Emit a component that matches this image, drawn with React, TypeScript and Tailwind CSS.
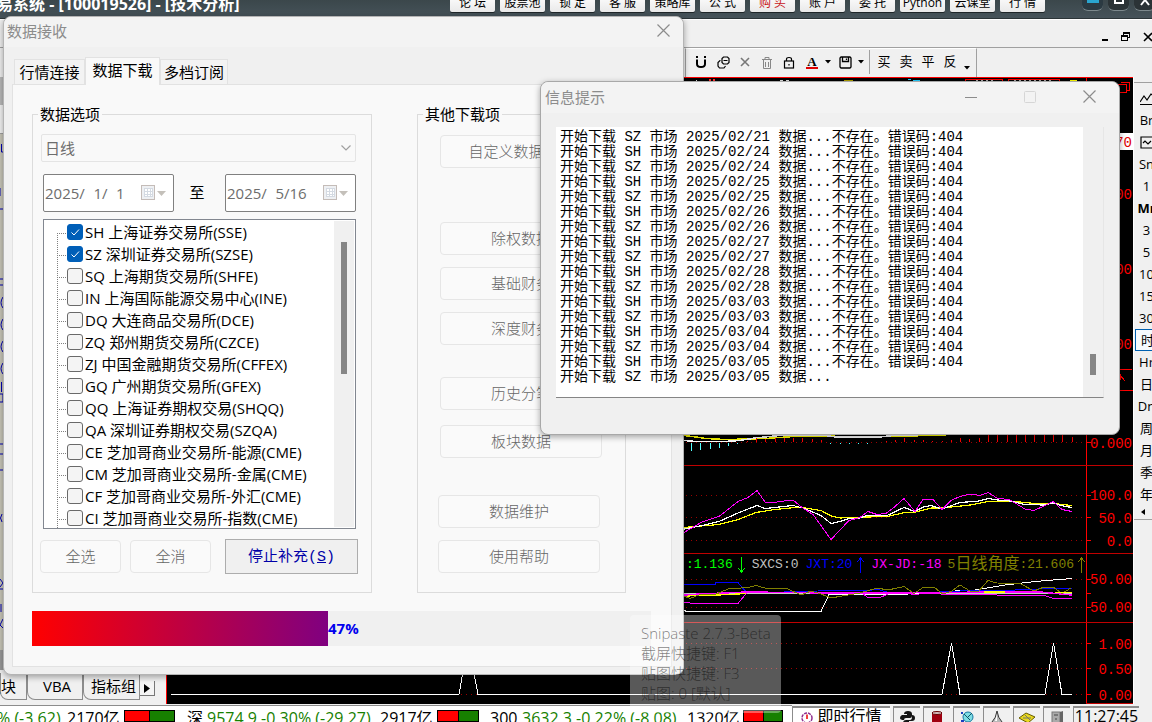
import React from 'react';

const navItems = ['论 坛', '股票池', '锁 定', '客 服', '策略库', '公 式', '购 买', '账 户', '委 托', 'Python', '云课堂', '行 情'];

const exchanges: { name: string; on?: boolean }[] = [
  { name: 'SH 上海证券交易所(SSE)', on: true },
  { name: 'SZ 深圳证券交易所(SZSE)', on: true },
  { name: 'SQ 上海期货交易所(SHFE)' },
  { name: 'IN 上海国际能源交易中心(INE)' },
  { name: 'DQ 大连商品交易所(DCE)' },
  { name: 'ZQ 郑州期货交易所(CZCE)' },
  { name: 'ZJ 中国金融期货交易所(CFFEX)' },
  { name: 'GQ 广州期货交易所(GFEX)' },
  { name: 'QQ 上海证券期权交易(SHQQ)' },
  { name: 'QA 深圳证券期权交易(SZQA)' },
  { name: 'CE 芝加哥商业交易所-能源(CME)' },
  { name: 'CM 芝加哥商业交易所-金属(CME)' },
  { name: 'CF 芝加哥商业交易所-外汇(CME)' },
  { name: 'CI 芝加哥商业交易所-指数(CME)' },
];

const failed: [string, string][] = [
  ['SZ', '02/21'], ['SH', '02/24'], ['SZ', '02/24'], ['SH', '02/25'], ['SZ', '02/25'], ['SH', '02/26'],
  ['SZ', '02/26'], ['SH', '02/27'], ['SZ', '02/27'], ['SH', '02/28'], ['SZ', '02/28'], ['SH', '03/03'],
  ['SZ', '03/03'], ['SH', '03/04'], ['SZ', '03/04'], ['SH', '03/05'],
];
const logText =
  failed.map(([m, d]) => `开始下载 ${m} 市场 2025/${d} 数据...不存在。错误码:404`).join('\n') +
  '\n开始下载 SZ 市场 2025/03/05 数据...';

function TitleBar() {
  return (
    <header className="flex h-[19px] shrink-0 items-start overflow-hidden border-b border-[#2c3538] bg-linear-to-b from-[#3b474b] to-[#46535a]">
      <h1 className="-mt-[6px] -ml-[3px] w-[453px] shrink-0 text-[16px] leading-5 font-bold whitespace-nowrap text-white">
        易系统 - [100019526] - [技术分析]
      </h1>
      <nav className="flex flex-1 gap-[5px]">
        {navItems.map((n) => (
          <button
            key={n}
            className={
              '-mt-[6px] h-[18px] w-[45px] shrink-0 rounded-xs bg-linear-to-b from-white to-[#e9e9e9] text-[12px] leading-[18px] whitespace-nowrap shadow-[0_1px_0_#1f2629] ' +
              (n === '购 买' ? 'text-[#c8181c]' : 'text-black')
            }
          >
            {n}
          </button>
        ))}
      </nav>
      <div className="flex w-[70px] shrink-0 gap-[5px]">
        <button aria-label="最小化" className="flex h-[11px] w-[21px] shrink-0 justify-center rounded-b-md border-b border-[#7d898d] bg-[#2b3a42]">
          <span className="h-[3px] w-[12px] bg-[#2aa5cf]" />
        </button>
        <button aria-label="最大化" className="flex h-[11px] w-[21px] shrink-0 justify-center rounded-b-md border-b border-[#7d898d] bg-[#2b3336]">
          <span className="h-[4px] w-[10px] border-2 border-t-0 border-white" />
        </button>
        <button aria-label="关闭" className="flex h-[11px] w-[21px] shrink-0 justify-center rounded-b-md border-b border-[#7d898d] bg-[#2b3336]">
          <svg width="10" height="6" stroke="#fff" strokeWidth="2"><path d="M1 5L5 0L9 5" fill="none" /></svg>
        </button>
      </div>
    </header>
  );
}

function MenuBar() {
  return (
    <div className="flex h-[29px] shrink-0 items-center justify-end gap-3 border-t border-b border-t-white border-b-[#a0a0a0] bg-[#f0f0f0] pt-[6px]">
      <button aria-label="最小化子窗口"><svg width="8" height="10"><rect x="1" y="7" width="6" height="2" /></svg></button>
      <button aria-label="还原子窗口">
        <svg width="10" height="10" fill="none" stroke="#000" shapeRendering="crispEdges">
          <path d="M2.5 3V.5h6v5H7M2 1h7" /><path d="M.5 3.5h6v5h-6zM0 4.5h7" />
        </svg>
      </button>
      <button aria-label="关闭子窗口"><svg width="9" height="10" stroke="#000" strokeWidth="1.6"><path d="M1 1l8 8M9 1l-8 8" /></svg></button>
    </div>
  );
}

const Caret = () => (
  <svg width="6" height="4"><path d="M0 0h6L3 3.5z" fill="#000" /></svg>
);

const toolBtn = 'flex h-6 w-[22px] shrink-0 items-center justify-center text-[13px] text-black';

function Toolbar() {
  return (
    <div className="flex h-[29px] shrink-0 bg-[#f0f0f0]">
      <div className="ml-[685px] flex items-center border-t border-r border-l border-t-white border-r-[#a0a0a0] border-l-[#a0a0a0] pr-1 pb-[2px] pl-1">
        <button className={toolBtn} aria-label="磁吸">
          <svg width="12" height="14" fill="none" stroke="#000" strokeWidth="2">
            <path d="M2 4.5V9q0 3 4 3t4-3V4.5" /><path d="M2 1v2M10 1v2" />
          </svg>
        </button>
        <button className={toolBtn} aria-label="复制">
          <svg width="13" height="13" fill="none" stroke="#000" strokeWidth="1.2">
            <path d="M6.5 1h4L12 2.500v4L10.500 8h-4L5 6.500v-4z" /><path d="M3.500 4.500H3L1 6.500V10l1.500 2H7l1.500-2M6.500 4.500h4" />
          </svg>
        </button>
        <button className={toolBtn} aria-label="删除">
          <svg width="10" height="10" stroke="#777" strokeWidth="1.6"><path d="M1 1l8 8M9 1L1 9" /></svg>
        </button>
        <button className={toolBtn} aria-label="清空">
          <svg width="12" height="13" fill="none" stroke="#888"><path d="M1 3.500h10M4 3V1.500h4V3M2.500 4v8.500h7V4M4.500 6v5M7.500 6v5" /></svg>
        </button>
        <button className={toolBtn} aria-label="锁定">
          <svg width="12" height="13" fill="none" stroke="#000" strokeWidth="1.2"><rect x="1.5" y="5" width="9" height="7" /><path d="M3.500 5V3q0-1.500 2.500-1.500T8.500 3v2M6 8v1.500" /></svg>
        </button>
        <button className={toolBtn + ' ml-px'} aria-label="字体颜色">
          <span className="border-b-2 border-[#e00000] px-px font-['Liberation_Serif',serif] text-[13px] leading-[11px] font-bold">A</span>
        </button>
        <button className="flex w-[10px] justify-center" aria-label="颜色选项"><Caret /></button>
        <button className={toolBtn + ' ml-px'} aria-label="保存">
          <svg width="13" height="13" fill="none" stroke="#000" strokeWidth="1.3"><path d="M2 1h9l1 1v9l-1 1H2l-1-1V2zM3.500 1v4.500h6V1M7.500 2.500v1.500" /></svg>
        </button>
        <button className="flex w-[10px] justify-center" aria-label="保存选项"><Caret /></button>
        <span className="mx-[3px] h-6 w-px bg-[#a0a0a0]" />
        <button className={toolBtn}>买</button>
        <button className={toolBtn}>卖</button>
        <button className={toolBtn}>平</button>
        <button className={toolBtn}>反</button>
        <button className="ml-px flex w-[10px] justify-center pt-3" aria-label="更多"><Caret /></button>
      </div>
    </div>
  );
}

function LeftColumn() {
  const tab = 'flex h-[27px] items-center justify-center rounded-bl-lg border-r border-b border-l border-[#8c8c8c] bg-[#f0f0f0] text-[15px] whitespace-nowrap text-black';
  return (
    <aside className="flex w-[166px] shrink-0 flex-col bg-[#f0f0f0]">
      <div className="h-[28px] bg-[#b9b9b9]" />
      <div className="h-[29px] border-b border-[#a0a0a0] bg-[#f4f4f4]" />
      <div className="flex-1 bg-[#c8c6b8]">
        <svg width="4" height="500" fill="none" stroke="#0000b4">
          <path d="M1.500 10v8h2M0 54v8M0 75h3M0 145h3M0 151h3M3 163q-4 6 0 11M3 185q-4 6 0 11M3 207q-4 6 0 11M3 229q-4 6 0 11M1.500 248v10M0 260h3v8H0M0 310h3M0 320h3M0 336h3M2 380q-3 4 0 8M0 445l3 4l-3 4M0 455h3M1 470v8M3 485l-3 6l3 3" />
        </svg>
      </div>
      <div className="h-5 bg-[#9a9a9a]" />
      <div className="flex h-[34px] pt-[3px]">
        <button className={tab + ' w-[27px] justify-end rounded-none pr-[10px]'}>板块</button>
        <button className={tab + ' w-[56px] pl-1'}>VBA</button>
        <button className={tab + ' w-[57px] pl-1'}>指标组</button>
        <button aria-label="向右" className="mt-2 flex size-[15px] items-center justify-center border-r border-b border-[#777] bg-[#f4f4f4]">
          <svg width="6" height="9"><path d="M0 0v9L6 4.500z" /></svg>
        </button>
      </div>
    </aside>
  );
}

const axisText = "font-['Liberation_Mono',monospace] text-[14px]";

function Axis({ top, height, labels, ticks = [], children, grow }: { top: number; height: number; labels: [string, number][]; ticks?: number[]; children?: React.ReactNode; grow?: boolean }) {
  return (
    <svg width="47" height={grow ? undefined : height} viewBox={`1086 ${top} 47 ${height}`} preserveAspectRatio="xMinYMax" className="shrink-0 overflow-hidden" shapeRendering="crispEdges">
      <path d={`M1086.5 ${top}v${height - 1}` + ticks.map((t) => `M1086 ${t + 0.5}h5`).join('')} stroke="#f00" fill="none" />
      <path d={`M1086 ${top + height - 0.5}h47`} stroke="#c00000" />
      {labels.map(([l, y]) => (
        <text key={l + y} x="1132" y={y + 5} textAnchor="end" fill="#f00" className={axisText}>{l}</text>
      ))}
      {children}
    </svg>
  );
}

function Plot({ top, height, grid, children, panelLine = true }: { top: number; height: number; grid: number[]; children?: React.ReactNode; panelLine?: boolean }) {
  return (
    <svg viewBox={`167 ${top} 919 ${height}`} preserveAspectRatio="none" className="h-full min-h-0 w-full min-w-0 flex-1" fill="none" shapeRendering="crispEdges">
      {grid.map((g) => (
        <path key={g} d={`M171 ${g + 0.5}H1086`} stroke="#900" strokeDasharray="1 4" />
      ))}
      {children}
      {panelLine && <path d={`M167 ${top + height - 0.5}h919`} stroke="#c00000" />}
    </svg>
  );
}

const cyanBars: [number, number][] = [[691, 451], [700, 450], [710, 449], [719, 448], [728, 446], [737, 444], [830, 444], [840, 444], [849, 444], [858, 444], [867, 444]];
const redBars: [number, number][] = [[747, 441], [756, 438], [765, 439], [775, 438], [784, 438], [793, 438], [802, 438], [812, 439], [821, 440], [886, 441], [895, 440], [904, 438], [914, 440], [923, 440], [932, 441], [942, 441], [951, 440], [960, 438], [969, 439], [979, 438], [988, 434], [997, 434], [1007, 434], [1016, 434], [1025, 434], [1034, 434], [1044, 434], [1053, 434], [1062, 435], [1072, 437]];

const Arrow = ({ down, color }: { down?: boolean; color: string }) => (
  <svg width="9" height="16" fill="none" stroke={color} shapeRendering="crispEdges">
    <path d={down ? 'M4.500 0v15M1 11l3.500 4L8 11' : 'M4.500 1v15M1 5l3.500-4L8 5'} />
  </svg>
);

function Charts() {
  return (
    <main className="flex min-w-0 flex-1 flex-col border-t border-l border-[#f00] bg-black">
      <section className="flex min-h-0 flex-1">
        <Plot top={78} height={388} grid={[442]}>
          <path d="M709 79.500h2M713 79.500h2" stroke="#f33" strokeWidth="2" />
          <path d="M696 80h1M780 80h3M786 80h3" stroke="#ddd" />
          <path d="M844 80.500h9" stroke="#b0a000" />
          <path d="M908 79.500h3M913 80.500h7" stroke="#2cf" />
          <path d="M965.500 82v-3h37v3M1008.500 82v-3h51v3" stroke="#f00" />
          <path d="M976 80.500h18M1014 80.500h40" stroke="#aaa" strokeDasharray="2 3" />
          <path d="M1070 80.500h7" stroke="#ff0" />
          <path d="M684 435.500L696 437L706 438.500L725 439.500L750 439L768 438.300L801 436L891 436.700L948 434.700L965 434.300" stroke="#ff0" strokeWidth="1.5" />
          <path d="M684 440.500L696 441.500L724 441.500L740 440.500L755 438L780 435.500L825 435.500L836 437L880 437L893 435.500L918 435" stroke="#fff" strokeWidth="1.5" />
          <path d={cyanBars.map(([x, y]) => `M${x + 0.5} 443V${y}`).join('')} stroke="#5ff" />
          <path d={redBars.map(([x, y]) => `M${x + 0.5} 442V${y}`).join('')} stroke="#f00" />
        </Plot>
        <Axis top={78} height={388} grow labels={[['0.000', 443], ['14.00', 194], ['13.00', 269], ['12.00', 344]]} ticks={[442]}>
          <path d="M1118.500 84.500h8v8h-8zM1121 82.500h8v8h-2" stroke="#f00" fill="none" />
          <rect x="1100" y="133" width="33" height="17" fill="#fff" />
          <text x="1132" y="147" textAnchor="end" fill="#e00000" className={axisText}>14.70</text>
          <path d="M1090 369.500h42M1090 390.500h43M1119 374l6 7M1120 374v6" stroke="#f00" fill="none" />
        </Axis>
      </section>
      <section className="flex h-[88px] shrink-0">
        <Plot top={466} height={88} grid={[495, 517, 540]}>
          <polyline stroke="#ff0" strokeWidth="1.2" points="684,527.5 701,526 719,524.5 737,520 756,512.5 775,509.5 795,507.5 805,508 821,510.5 831,516 840,518 867,517 887,516.5 905,512.5 914,512.5 932,508 942,508 970,505 988,501.5 1010,501 1035,503.5 1053,503.5 1072,505.5" />
          <polyline stroke="#fff" strokeWidth="1.2" points="684,529 702,525.5 719,521.5 738,513 757,505.5 765,508.5 793,505.5 803,508 821,515.5 831,523.5 840,521.5 849,518.5 860,518 867,515.5 887,515.5 904,507.5 915,511.5 923,507 931,505.5 942,509 960,502.5 979,501 988,498.5 998,500 1010,501 1025,504.5 1044,505 1053,503 1063,506 1072,507.5" />
          <polyline stroke="#f0f" points="684,532.5 702,522 719,516.5 738,501.5 748,497.5 757,490.5 765,502 777,502 784,501 793,500 802,507.5 813,514.5 831,539.5 849,520.5 860,517.5 868,511.5 877,514.5 886,513.5 895,506.5 904,498.5 915,511.5 923,499.5 933,499.5 942,509.5 951,500.5 960,496.5 970,494 980,495.5 988,492.5 997,498 1010,500 1025,509 1034,510.5 1045,505.5 1053,501.5 1062,509.5 1072,511.5" />
        </Plot>
        <Axis top={466} height={88} labels={[['100.0', 495], ['50.0', 518], ['0.0', 541]]} ticks={[495, 517, 540]} />
      </section>
      <section className="flex h-[69px] shrink-0">
        <div className="flex min-w-0 flex-1 flex-col">
          <div className="flex h-[21px] shrink-0 items-center justify-end font-['Liberation_Mono','Noto_Sans_CJK_SC',monospace] text-[13px] whitespace-nowrap">
            <span className="flex items-center gap-1 text-[#0f0]">:1.136<Arrow down color="#0f0" /></span>
            <span className="ml-[6px] text-[#c0c0c0]">SXCS:0</span>
            <span className="ml-[7px] flex items-center gap-1 text-[#00f]">JXT:20<Arrow color="#00f" /></span>
            <span className="ml-[6px] text-[#f0f]">JX-JD:-18</span>
            <span className="ml-[6px] flex items-center text-[#808000]">5<span className="text-[16px] leading-5">日线角度</span>:21.606<span className="ml-[3px] flex"><Arrow color="#808000" /></span></span>
          </div>
          <div className="flex h-[48px]">
            <Plot top={575} height={48} grid={[579, 607]}>
              <path d="M684 593.500H1072" stroke="#ccc" />
              <polyline stroke="#ff0" strokeWidth="1.5" points="684,596 710,595 733,594.5 747,593" />
              <polyline stroke="#fff" points="684,610.5 687,611.5 821,611.5 829,594.5 900,594.5 955,591 975,590 1005,585 1035,581.5 1072,578.5" />
              <polyline stroke="#00f" points="684,584.5 715,584.5 716,582.5 738,582.5 747,593 767,592.5 835,590.5 870,590.5 877,589 888,592.5 940,592 980,590 1015,590 1050,588.5 1072,588.5" />
              <polyline stroke="#f0f" strokeWidth="1.5" points="684,595 700,594 747,592 830,593 880,593 950,592.5 985,592 1040,592 1072,595" />
              <polyline stroke="#f0f" points="684,602.5 696,603.5 738,603.5 747,592.5 830,593 862,593 868,597.5 880,597.5 888,594 905,592 914,595 925,593 948,594.5 1045,595.5 1053,598.5 1072,598.5" />
              <polyline stroke="#808000" points="684,596 690,598.5 700,594.5 715,594.5 728,589 748,587.5 756,585.5 765,588 788,589 801,595 811,591 821,594 831,598 845,595.5 860,593 877,588 888,590 904,586.5 914,593.5 923,587.5 935,588 943,594 951,591.5 960,585 970,591 978,592 988,580.5 997,583 1020,583.5 1034,591 1044,587 1053,587 1062,593.5 1071,588" />
              <path d="M984 592H1005M1055 592.500H1072" stroke="#ff0" strokeWidth="1.5" />
            </Plot>
          </div>
        </div>
        <Axis top={554} height={69} labels={[['50.00', 579], ['50.00', 607]]} ticks={[579, 593, 607]} />
      </section>
      <section className="flex h-[81px] shrink-0">
        <Plot top={623} height={81} grid={[643, 668, 694]} panelLine={false}>
          <polyline stroke="#fff" points="171,694.5 459,694.5 468,643 478,694.5 942,694.5 951.5,643 960,694.5 1045,694.5 1053.5,643 1062,694.5 1072,694.5" />
        </Plot>
        <Axis top={623} height={81} labels={[['1.00', 644], ['0.50', 669], ['0.00', 695]]} ticks={[643, 668, 694]} />
      </section>
    </main>
  );
}

const periods = ['线', 'Br', '图', 'Sn', '1', 'Mr', '3', '5', '10', '15', '30', '时', 'Hr', '日', 'Dn', '周', '月', '季', '年'];

function PeriodBar() {
  return (
    <aside className="flex w-[19px] shrink-0 flex-col overflow-hidden border-l border-white bg-[#f0f0f0] pt-[5px] text-black">
      <div className="flex w-full flex-col border-t border-b border-[#a0a0a0] pt-1">
        {periods.map((p) => {
          const base = 'flex h-[22px] w-[25px] shrink-0 items-center justify-center text-[13px] leading-none whitespace-nowrap ';
          if (p === '线' || p === '图')
            return (
              <button key={p} className={base} aria-label={p === '线' ? '走势线' : '走势图'}>
                <svg width="14" height="13" fill="none" stroke="#000" strokeWidth="1.2">
                  {p === '线' ? <path d="M0 10L4 4l3 4l4-6l3 2M0 12.500h14" /> : <path d="M1 1h12v11H1zM3 7l2-2l3 3l3-3" />}
                </svg>
              </button>
            );
          return (
            <button key={p} className={base + (p === '时' ? 'ml-px border border-[#0060b0] bg-[#f6fafd]' : p === 'Mr' ? 'font-bold' : '')}>
              {p}
            </button>
          );
        })}
        <button aria-label="收起" className="flex h-[14px] w-[18px] items-center justify-center"><svg width="4" height="6"><path d="M4 0v6L0 3z" /></svg></button>
      </div>
    </aside>
  );
}

const Ratio = ({ w }: { w: string }) => (
  <span className={'mt-[2px] flex h-3 shrink-0 border border-black ' + w}>
    <span className="flex-1 bg-[#f00]" />
    <span className="flex-1 border-l border-black bg-[#178000]" />
  </span>
);

const cell = 'flex h-full shrink-0 items-start justify-center border-t-2 border-l border-[#8c8c8c] bg-[#f0f0f0] ';

function StatusBar() {
  return (
    <footer className="flex h-[18px] shrink-0 items-start overflow-hidden border-t border-[#f0f0f0] bg-white text-[16px] leading-[20px] whitespace-nowrap text-black">
      <div className="flex h-full w-[792px] shrink-0 items-start overflow-hidden border-t border-[#8c8c8c] pt-[2px]">
        <span className="-ml-[3px] w-[70px] shrink-0 text-[#178000]">% (-3.62)</span>
        <span className="w-[57px] shrink-0">2170亿</span>
        <Ratio w="w-[51px]" />
        <span className="ml-3 w-[20px] shrink-0">深</span>
        <span className="w-[173px] shrink-0 text-[#178000]">9574.9 -0.30% (-29.27)</span>
        <span className="w-[57px] shrink-0">2917亿</span>
        <Ratio w="w-[42px]" />
        <span className="ml-[11px] w-8 shrink-0">300</span>
        <span className="w-[165px] shrink-0 text-[#178000]">3632.3 -0.22% (-8.08)</span>
        <span className="w-[56px] shrink-0">1320亿</span>
        <Ratio w="w-[40px]" />
      </div>
      <div className="flex h-full flex-1 gap-[3px] bg-[#f0f0f0] pt-px leading-[17px]">
        <div className={cell + 'w-[98px] gap-1 bg-white'}>
          <svg className="mt-[4px]" width="12" height="12" fill="none" stroke="#903090" strokeWidth="1.5"><circle cx="6" cy="6" r="5" strokeDasharray="3 1" /><path d="M6 2.500V7" stroke="#e00" /></svg>
          <span>即时行情</span>
        </div>
        <div className={cell + 'w-[27px] pt-[3px]'}>
          <svg width="15" height="14" fill="#151515"><path d="M4 3q0-3 4-3t4 3v2q0 2-2 2H6q-2 0-2 2q-4 0-4-2t2-3h5V3z" /><path d="M12 4q3 0 3 3t-3 3H9v2q0 2-3 2t-3-2q0-3 3-3h4q2 0 2-3z" /></svg>
        </div>
        <div className={cell + 'w-[27px] pt-[3px]'}>
          <svg width="12" height="14"><path d="M1 2v12h10V2z" fill="#a00010" /><ellipse cx="6" cy="2" rx="5" ry="1.5" fill="#d8c0c0" stroke="#600" /></svg>
        </div>
        <div className={cell + 'w-[27px] pt-[3px]'}>
          <svg width="14" height="14"><circle cx="8" cy="6" r="5" fill="#7fdde4" stroke="#1878a0" /><path d="M4 3l6 6M7 7l5-5" stroke="#156" /><path d="M1 1h2v2H1zM1 9h3v4H1z" fill="#1b3fc0" /></svg>
        </div>
        <div className={cell + 'w-[27px] pt-[3px]'}>
          <svg width="14" height="14"><path d="M7 0q1 7 5 11v2H2v-2q4-4 5-11z" fill="#b8b8b8" stroke="#333" /><path d="M5 10l2-7v7z" fill="#fff" /></svg>
        </div>
        <div className={cell + 'w-[27px] pt-[3px]'}>
          <svg width="16" height="14"><path d="M0 7l7-5l9 4l-7 6z" fill="#e8d820" stroke="#665c00" /><path d="M4 7h8M6 4l5 5" stroke="#776" /></svg>
        </div>
        <div className={cell + 'w-[27px] pt-[3px]'}>
          <svg width="13" height="14"><rect x="1" y="1" width="8" height="13" fill="#aaa" stroke="#777" /><path d="M9 1l3-1v14H9z" fill="#666" /><path d="M3 4h4M5 7v2" stroke="#444" /></svg>
        </div>
        <div className={cell + 'w-[66px]'}>11:27:45</div>
      </div>
    </footer>
  );
}

const CloseGlyph = () => (
  <svg width="13" height="13" stroke="#8c8c8c" strokeWidth="1.2"><path d="M.5.5l12 12M12.500.5l-12 12" /></svg>
);

function DateField({ label, value }: { label: string; value: string }) {
  return (
    <label className="flex h-[38px] w-[131px] items-center rounded-xs border border-[#808080] bg-white pr-[7px] pl-px">
      <span className="sr-only">{label}</span>
      <input className="w-24 min-w-0 flex-1 bg-transparent text-[15px] text-[#6d6d6d]" defaultValue={value} disabled />
      <svg width="15" height="16" fill="none" shapeRendering="crispEdges">
        <path d="M.5.5h13v14H.5z" fill="#eef0f3" stroke="#c4bcb8" /><path d="M3.500 3.500h8v8h-8zM3 6.500h9M3 9.500h9M6.500 3v9M9.500 3v9" stroke="#d4dae2" fill="#fff" />
      </svg>
      <svg className="ml-px" width="9" height="5"><path d="M0 0h9L4.500 5z" fill="#c4c0ba" /></svg>
    </label>
  );
}

const ghost = 'flex h-[33px] items-center justify-center rounded border border-[#e6e6e6] bg-[#fafafa] text-[15px] font-light whitespace-nowrap text-[#666]';

function DataDialog() {
  const tab = 'border border-b-0 border-[#e2e2e2] text-[15px] leading-5 whitespace-nowrap text-black ';
  return (
    <section aria-label="数据接收" className="absolute top-[16px] left-[3px] w-[681px] rounded-lg border border-[#b4b4b4] bg-[#f0f0f0] pb-[7px] shadow-[0_2px_6px_rgba(0,0,0,0.35)]">
      <div className="flex h-[30px] items-center justify-between rounded-t-lg bg-[#f3f3f3] pr-[13px] pb-[3px] pl-[3px]">
        <h2 className="text-[15px] leading-5 text-[#8c8c8c]">数据接收</h2>
        <button aria-label="关闭"><CloseGlyph /></button>
      </div>
      <div role="tablist" className="flex items-end pt-[10px] pl-[10px]">
        <button role="tab" className={tab + 'h-[25px] w-[71px] bg-[#f3f3f3]'}>行情连接</button>
        <button role="tab" aria-selected="true" className={tab + 'relative -mb-px h-[28px] w-[75px] bg-[#f9f9f9] pb-1'}>数据下载</button>
        <button role="tab" className={tab + 'h-[25px] w-[68px] bg-[#f3f3f3]'}>多档订阅</button>
      </div>
      <div className="mr-[11px] ml-2 border border-[#e2e2e2] bg-[#f9f9f9] pt-[19px] pr-5 pb-5 pl-[19px]">
        <div className="flex gap-[45px]">
          <fieldset className="h-[489px] w-[340px] border border-[#dcdcdc]">
            <legend className="ml-[5px] px-[2px] text-[15px] leading-5 text-black">数据选项</legend>
            <div className="relative mt-[10px] ml-2 w-[315px]">
              <select aria-label="周期" disabled className="block h-7 w-full appearance-none rounded-xs border border-[#e4e4e4] bg-[#f9f9f9] pl-[3px] text-[15px] text-[#6d6d6d] opacity-100">
                <option>日线</option>
              </select>
              <svg className="absolute top-[11px] right-[5px]" width="10" height="6" fill="none" stroke="#a0a0a0" strokeWidth="1.2"><path d="M.5.5L5 5L9.500.5" /></svg>
            </div>
            <div className="mt-3 ml-[10px] flex w-[313px] items-center">
              <DateField label="开始日期" value={'2025/\u20071/\u20071'} />
              <span className="w-[51px] pr-[5px] pb-[2px] text-center text-[15px] text-black">至</span>
              <DateField label="结束日期" value={'2025/\u20075/16'} />
            </div>
            <div className="mt-[7px] ml-[10px] flex h-[310px] w-[313px] overflow-hidden border border-[#828790] bg-white">
              <ul className="min-w-0 flex-1 pt-px pl-[13px]">
                {exchanges.map((e, i) => (
                  <li key={e.name} className="flex h-[22px] items-center">
                    <svg width="10" height="22" stroke="#808080" strokeDasharray="1 1" shapeRendering="crispEdges">
                      <path d={i === 0 ? 'M.5 12V22M0 12.500h10' : 'M.5 0V22M0 12.500h10'} />
                    </svg>
                    <label className="flex items-center gap-[2px] text-[15px] leading-[22px] whitespace-nowrap text-black">
                      <span className="relative flex">
                        <input type="checkbox" defaultChecked={e.on} className="size-4 appearance-none rounded-[3px] border border-[#6a6a6a] bg-[#f4f4f4] checked:border-[#005fb8] checked:bg-[#005fb8]" />
                        {e.on && <svg className="pointer-events-none absolute inset-0" width="16" height="16" fill="none" stroke="#fff"><path d="M4.500 8.500l2.500 2.500L12 5.500" /></svg>}
                      </span>
                      {e.name}
                    </label>
                  </li>
                ))}
              </ul>
              <div className="my-px mr-px w-5 shrink-0 bg-[#f0f0f0] pt-[21px] pl-[7px]">
                <div className="h-[132px] w-[6px] bg-[#868686]" />
              </div>
            </div>
            <div className="mt-[10px] ml-[7px] flex items-center">
              <button disabled className={ghost + ' w-[81px]'}>全选</button>
              <button disabled className={ghost + ' ml-[9px] w-[81px]'}>全消</button>
              <button className="ml-[14px] h-[35px] w-[133px] border border-[#adadad] bg-[#f0f0f0] text-[15px] text-[#0000a8]">
                停止补充<span className="font-['Liberation_Mono',monospace]">(<u>S</u>)</span>
              </button>
            </div>
          </fieldset>
          <fieldset className="h-[489px] w-[209px] border border-[#dcdcdc]">
            <legend className="ml-[5px] px-[2px] text-[15px] leading-5 text-black">其他下载项</legend>
            <div className="mt-[11px] ml-[22px] flex w-[162px] flex-col">
              <button disabled className={ghost}>自定义数据下载</button>
              <button disabled className={ghost + ' mt-[54px]'}>除权数据</button>
              <button disabled className={ghost + ' mt-3'}>基础财务</button>
              <button disabled className={ghost + ' mt-3'}>深度财务</button>
              <button disabled className={ghost + ' mt-8'}>历史分笔</button>
              <button disabled className={ghost + ' mt-[15px]'}>板块数据</button>
            </div>
            <div className="mt-[37px] ml-5 flex w-[162px] flex-col gap-3">
              <button disabled className={ghost}>数据维护</button>
              <button disabled className={ghost}>使用帮助</button>
            </div>
          </fieldset>
        </div>
        <div role="progressbar" aria-label="下载进度" aria-valuenow={47} className="mt-[18px] flex h-[35px] items-center bg-[#f0f0f0]">
          <div className="h-full w-[296px] bg-linear-to-r/srgb from-[#ff0000] to-[#800080]" />
          <span className="text-[15px] font-bold text-[#0000ee]">47%</span>
        </div>
      </div>
    </section>
  );
}

function MessageDialog() {
  return (
    <section aria-label="信息提示" className="absolute top-[81px] left-[540px] w-[580px] rounded-lg border border-[#a8a8a8] bg-[#f0f0f0] pb-9 shadow-[0_2px_6px_rgba(0,0,0,0.35)]">
      <div className="flex h-[31px] items-center rounded-t-lg bg-[#f3f3f3] pr-[23px] pb-[2px] pl-1">
        <h2 className="flex-1 text-[15px] leading-5 text-[#8c8c8c]">信息提示</h2>
        <div className="flex items-center gap-[47px]">
          <button aria-label="最小化"><svg width="12" height="12" stroke="#8c8c8c"><path d="M0 6.500h12" /></svg></button>
          <button aria-label="最大化" disabled><svg width="12" height="12" fill="none" stroke="#d6d6d6"><rect x=".5" y=".5" width="11" height="11" rx="1" /></svg></button>
          <button aria-label="关闭"><CloseGlyph /></button>
        </div>
      </div>
      <div className="mt-[14px] mr-[15px] ml-[15px] flex h-[271px] border-r border-b border-r-[#e6e6e6] border-b-[#858585] bg-white">
        <textarea
          aria-label="下载日志"
          readOnly
          value={logText}
          className="block min-w-0 flex-1 resize-none overflow-hidden bg-white pt-[3px] pl-1 font-['Liberation_Mono','Noto_Sans_CJK_SC',monospace] text-[14px] leading-[15px] whitespace-pre text-black outline-none"
        />
        <div className="w-5 shrink-0 bg-[#f0f0f0] pt-[227px] pl-[7px]">
          <div className="h-[21px] w-[6px] bg-[#868686]" />
        </div>
      </div>
    </section>
  );
}

function Toast() {
  return (
    <div className="absolute top-[615px] left-[630px] w-[151px] rounded bg-white/35 px-[11px] pt-2 pb-[10px] text-[15px] leading-5 font-light whitespace-nowrap text-black/50">
      <p>Snipaste 2.7.3-Beta</p>
      <p>截屏快捷键: F1</p>
      <p>贴图快捷键: F3</p>
      <p>贴图: 0 [默认]</p>
    </div>
  );
}

export default function App() {
  return (
    <div className="relative flex h-screen flex-col overflow-hidden bg-[#f0f0f0] font-['Open_Sans','Noto_Sans_CJK_SC',sans-serif]">
      <TitleBar />
      <MenuBar />
      <Toolbar />
      <div className="flex min-h-0 flex-1">
        <LeftColumn />
        <Charts />
        <PeriodBar />
      </div>
      <StatusBar />
      <DataDialog />
      <MessageDialog />
      <Toast />
    </div>
  );
}
